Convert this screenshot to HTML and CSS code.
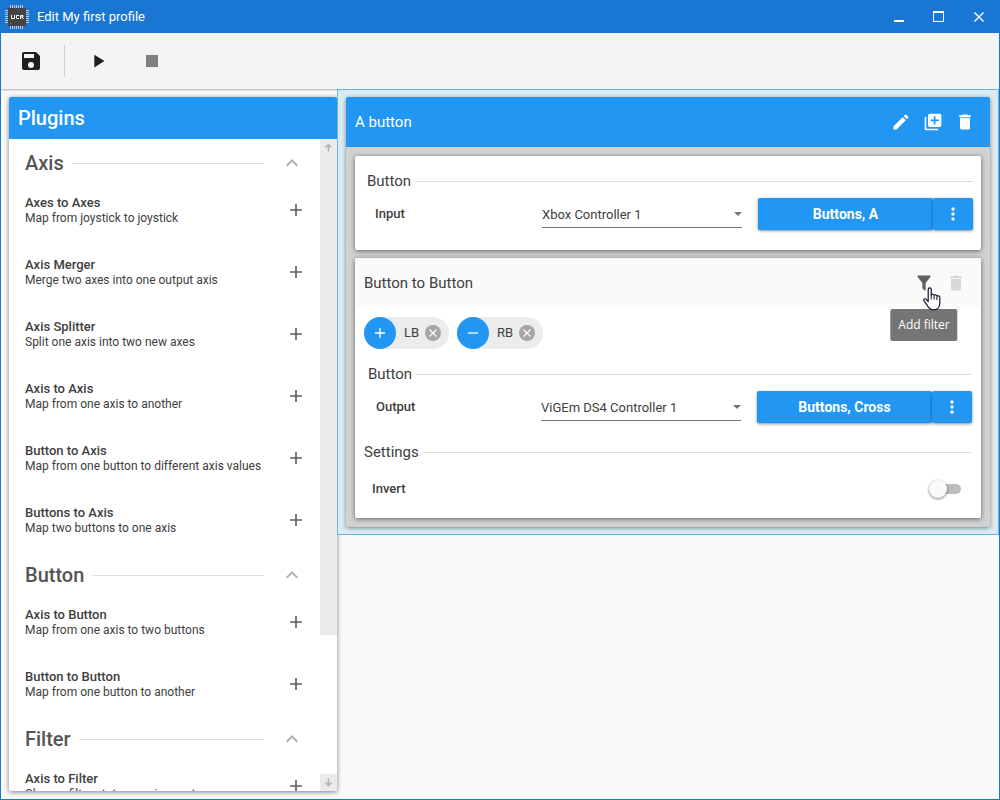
FILE: index.html
```html
<!DOCTYPE html>
<html lang="en">
<head>
<meta charset="utf-8">
<title>Edit My first profile</title>
<link rel="stylesheet" href="styles.css">
</head>
<body>
<svg class="symbols" aria-hidden="true">
  <symbol id="i-thin-plus" viewBox="0 0 12 12"><path fill="none" stroke="currentColor" stroke-width="1.700" d="M6 0v12M0 6h12"/></symbol>
  <symbol id="i-up" viewBox="0 0 24 24"><path d="M7.400 15.400 12 10.800l4.600 4.600L18 14l-6-6-6 6z"/></symbol>
  <symbol id="i-trash" viewBox="0 0 24 24"><path d="M19 4h-3.500l-1-1h-5l-1 1H5v2h14M6 19a2 2 0 0 0 2 2h8a2 2 0 0 0 2-2V7H6z"/></symbol>
  <symbol id="i-dots" viewBox="0 0 24 24"><path d="M12 16a2 2 0 1 1 0 4 2 2 0 0 1 0-4m0-6a2 2 0 1 1 0 4 2 2 0 0 1 0-4m0-6a2 2 0 1 1 0 4 2 2 0 0 1 0-4"/></symbol>
  <symbol id="i-cross" viewBox="0 0 16 16"><circle cx="8" cy="8" r="8" fill="#a6a6a6"/><path d="M4.500 4.500l7 7m0-7l-7 7" stroke="#fff" stroke-width="1.200" fill="none"/></symbol>
</svg>

<header class="titlebar">
  <svg class="logo" viewBox="0 0 24 24" aria-hidden="true">
    <path stroke="#c4c8cc" stroke-width="1" d="M5.500 0v24M7.500 0v24M9.500 0v24M11.500 0v24M13.500 0v24M15.500 0v24M17.500 0v24M0 5.500h24M0 7.500h24M0 9.500h24M0 11.500h24M0 13.500h24M0 15.500h24M0 17.500h24"/>
    <rect x="3" y="3" width="18" height="18" rx="1" fill="#444"/>
    <path fill="none" stroke="#fff" stroke-width="1" d="M6.500 10v3.500h3V10M14 10.500h-2.500v3H14M15.500 14v-3.500h2.500v1.500h-2.500M17 12l1.500 2"/>
    <rect x="5" y="18" width="1" height="1" fill="#888"/>
  </svg>
  <h1 class="title">Edit My first profile</h1>
  <button class="win-btn" aria-label="Minimize"><svg width="12" height="12"><path d="M1 9h10v2H1z"/></svg></button>
  <button class="win-btn" aria-label="Maximize"><svg width="12" height="12"><path fill-rule="evenodd" d="M0 0h11v11H0zM1 2v8h9V2z"/></svg></button>
  <button class="win-btn" aria-label="Close"><svg width="12" height="12"><path fill="none" stroke="#fff" stroke-width="1.400" d="M1.500 1.500l9 9m0-9l-9 9"/></svg></button>
</header>

<nav class="toolbar">
  <button class="tool" aria-label="Save"><svg width="24" height="24" viewBox="0 0 24 24"><path d="M15 9H5V5h10m-3 14a3 3 0 1 1 0-6 3 3 0 0 1 0 6m5-16H5a2 2 0 0 0-2 2v14a2 2 0 0 0 2 2h14a2 2 0 0 0 2-2V7z"/></svg></button>
  <span class="tool-sep"></span>
  <button class="tool" aria-label="Play"><svg width="22" height="22" viewBox="0 0 24 24"><path d="M8 5.100v14L19 12z"/></svg></button>
  <button class="tool" aria-label="Stop" disabled><svg width="24" height="24" viewBox="0 0 24 24"><path d="M6 6h12v12H6z"/></svg></button>
</nav>

<div class="workspace">
  <aside class="plugins">
    <h2 class="plugins-title">Plugins</h2>
    <div class="plugins-body">
      <div class="plugin-list">
        <section>
          <h3 class="group"><span>Axis</span><button class="icon-sm" aria-label="Collapse Axis"><svg width="24" height="24"><use href="#i-up"/></svg></button></h3>
          <ul class="items">
            <li><div><b>Axes to Axes</b><p>Map from joystick to joystick</p></div><button class="add" aria-label="Add Axes to Axes"><svg width="12" height="12"><use href="#i-thin-plus"/></svg></button></li>
            <li><div><b>Axis Merger</b><p>Merge two axes into one output axis</p></div><button class="add" aria-label="Add Axis Merger"><svg width="12" height="12"><use href="#i-thin-plus"/></svg></button></li>
            <li><div><b>Axis Splitter</b><p>Split one axis into two new axes</p></div><button class="add" aria-label="Add Axis Splitter"><svg width="12" height="12"><use href="#i-thin-plus"/></svg></button></li>
            <li><div><b>Axis to Axis</b><p>Map from one axis to another</p></div><button class="add" aria-label="Add Axis to Axis"><svg width="12" height="12"><use href="#i-thin-plus"/></svg></button></li>
            <li><div><b>Button to Axis</b><p>Map from one button to different axis values</p></div><button class="add" aria-label="Add Button to Axis"><svg width="12" height="12"><use href="#i-thin-plus"/></svg></button></li>
            <li><div><b>Buttons to Axis</b><p>Map two buttons to one axis</p></div><button class="add" aria-label="Add Buttons to Axis"><svg width="12" height="12"><use href="#i-thin-plus"/></svg></button></li>
          </ul>
        </section>
        <section>
          <h3 class="group"><span>Button</span><button class="icon-sm" aria-label="Collapse Button"><svg width="24" height="24"><use href="#i-up"/></svg></button></h3>
          <ul class="items">
            <li><div><b>Axis to Button</b><p>Map from one axis to two buttons</p></div><button class="add" aria-label="Add Axis to Button"><svg width="12" height="12"><use href="#i-thin-plus"/></svg></button></li>
            <li><div><b>Button to Button</b><p>Map from one button to another</p></div><button class="add" aria-label="Add Button to Button"><svg width="12" height="12"><use href="#i-thin-plus"/></svg></button></li>
          </ul>
        </section>
        <section>
          <h3 class="group"><span>Filter</span><button class="icon-sm" aria-label="Collapse Filter"><svg width="24" height="24"><use href="#i-up"/></svg></button></h3>
          <ul class="items">
            <li><div><b>Axis to Filter</b><p>Change filter state on axis event</p></div><button class="add" aria-label="Add Axis to Filter"><svg width="12" height="12"><use href="#i-thin-plus"/></svg></button></li>
          </ul>
        </section>
      </div>
      <div class="scroll" aria-hidden="true">
        <div class="thumb"><svg width="9" height="9"><path d="M4.500 8.500V1.500M1.500 4.500l3-3 3 3"/></svg></div>
        <div class="scroll-end"><svg width="9" height="9"><path d="M4.500 .500v7M1.500 4.500l3 3 3-3"/></svg></div>
      </div>
    </div>
  </aside>

  <main class="content">
    <div class="selected">
      <article class="mapping">
        <header class="mapping-head">
          <h2>A button</h2>
          <button class="icon" aria-label="Rename"><svg width="20" height="20" viewBox="0 0 24 24"><path d="M20.700 7c.4-.4.4-1 0-1.400l-2.300-2.300a1 1 0 0 0-1.400 0l-1.800 1.800 3.700 3.700M3 17.200V21h3.700L17.800 9.900 14.100 6.200z"/></svg></button>
          <button class="icon" aria-label="Duplicate"><svg width="20" height="20" viewBox="0 0 24 24"><path fill-rule="evenodd" d="M2 6h2v14h14v2H4a2 2 0 0 1-2-2zM8 2h12a2 2 0 0 1 2 2v12a2 2 0 0 1-2 2H8a2 2 0 0 1-2-2V4a2 2 0 0 1 2-2zm5 3v4H9v2h4v4h2v-4h4V9h-4V5z"/></svg></button>
          <button class="icon" aria-label="Delete"><svg width="20" height="20"><use href="#i-trash"/></svg></button>
        </header>
        <div class="mapping-body">
          <section class="card card-input">
            <h3 class="legend">Button</h3>
            <div class="row">
              <label for="input-dev">Input</label>
              <span class="select"><select id="input-dev"><option>Xbox Controller 1</option></select><svg width="8" height="4"><path d="M0 0h8L4 4z"/></svg></span>
              <span class="split"><button class="bind">Buttons, A</button><button class="more" aria-label="Input options"><svg width="20" height="20"><use href="#i-dots"/></svg></button></span>
            </div>
          </section>

          <section class="card">
            <header class="card-head">
              <h3>Button to Button</h3>
              <div class="tip-anchor">
                <button class="icon" aria-label="Add filter" aria-describedby="tip"><svg width="20" height="20" viewBox="0 0 24 24"><path d="M14 12v7.900c0 .3-.1.600-.3.800a1 1 0 0 1-1.400 0l-2-2c-.2-.2-.3-.5-.3-.8V12L4.200 4.600A1 1 0 0 1 5 3h14a1 1 0 0 1 .8 1.600z"/></svg></button>
                <svg class="cursor" width="18" height="24" viewBox="0 0 18 24" aria-hidden="true"><path fill="#fff" stroke="#15152a" stroke-width="1.200" stroke-linejoin="round" d="M5.200 14.500V2.500c0-2.200 3-2.200 3 0v5.600c.5-1.400 2.900-1.100 2.900.5.600-1.200 2.800-.8 2.800.7.700-.9 2.900-.6 2.900 1.200v5.500c0 3.700-2.200 6.800-6.100 6.800-3.500 0-4.900-1.700-6.200-4.100L1 13.900c-.9-1.700 1-2.800 2.200-1.600z"/><path fill="none" stroke="#15152a" d="M8.200 8v4.500M11.100 9v3.500M13.900 10v3"/></svg>
                <span class="tip" id="tip" role="tooltip">Add filter</span>
              </div>
              <button class="icon" aria-label="Delete plugin" disabled><svg width="20" height="20"><use href="#i-trash"/></svg></button>
            </header>
            <div class="chips">
              <span class="chip"><span class="chip-icon"><svg width="20" height="20" viewBox="0 0 20 20"><path d="M10 5v10M5 10h10"/></svg></span>LB<button aria-label="Remove LB"><svg width="16" height="16"><use href="#i-cross"/></svg></button></span>
              <span class="chip"><span class="chip-icon"><svg width="20" height="20" viewBox="0 0 20 20"><path d="M5 10h10"/></svg></span>RB<button aria-label="Remove RB"><svg width="16" height="16"><use href="#i-cross"/></svg></button></span>
            </div>
            <div class="binding">
              <h3 class="legend">Button</h3>
              <div class="row">
                <label for="output-dev">Output</label>
                <span class="select"><select id="output-dev"><option>ViGEm DS4 Controller 1</option></select><svg width="8" height="4"><path d="M0 0h8L4 4z"/></svg></span>
                <span class="split"><button class="bind">Buttons, Cross</button><button class="more" aria-label="Output options"><svg width="20" height="20"><use href="#i-dots"/></svg></button></span>
              </div>
            </div>
            <div class="settings">
              <h3 class="legend">Settings</h3>
              <div class="row">
                <label for="invert">Invert</label>
                <input class="switch" type="checkbox" role="switch" id="invert">
              </div>
            </div>
          </section>
        </div>
      </article>
    </div>
  </main>
</div>
</body>
</html>
```
FILE: styles.css
```css
* { box-sizing: border-box; margin: 0; padding: 0; }

body {
  display: flex;
  flex-direction: column;
  height: 100vh;
  border: 1px solid #1976d2;
  background: #fafafa;
  color: #404040;
  font: 13px/16px Roboto, sans-serif;
  overflow: hidden;
}

svg { display: block; fill: currentColor; }
.symbols { position: absolute; width: 0; height: 0; }
button, select { font: inherit; color: inherit; background: none; border: 0; }
button { display: flex; align-items: center; justify-content: center; }

/* Window chrome */
.titlebar {
  display: flex;
  align-items: center;
  height: 32px;
  padding-left: 4px;
  background: #1976d2;
  color: #fff;
}
.logo { width: 24px; height: 24px; margin-right: 8px; }
.title { flex: 1; font-size: 13px; font-weight: 400; }
.win-btn { width: 40px; height: 32px; }

.toolbar {
  display: flex;
  align-items: center;
  height: 56px;
  flex-shrink: 0;
  padding-left: 6px;
  background: #f4f4f4;
  color: #202020;
  box-shadow: 0 1px 2px rgba(0, 0, 0, .3);
}
.tool { width: 48px; height: 48px; margin-right: 6px; }
.tool:disabled { color: #808080; }
.tool-sep { width: 1px; height: 32px; margin: 0 9px 0 3px; background: #cfcfcf; }

.workspace { display: flex; flex: 1; min-height: 0; }

/* Plugin sidebar */
.plugins {
  display: flex;
  flex-direction: column;
  flex: 0 0 328px;
  margin: 8px 0 8px 8px;
  background: #fff;
  border-radius: 2px;
  box-shadow: 0 1px 5px rgba(0, 0, 0, .5);
  overflow: hidden;
}
.plugins-title {
  padding: 9px;
  background: #2196f3;
  color: #fff;
  font-size: 20px;
  line-height: 24px;
  font-weight: 500;
}
.plugins-body { display: flex; flex: 1; min-height: 0; }
.plugin-list { flex: 1; overflow: hidden; padding-left: 16px; }
.group {
  display: flex;
  align-items: center;
  height: 48px;
  padding-right: 16px;
  color: #555;
  font-size: 20px;
  font-weight: 500;
}
.group span { display: flex; align-items: center; flex: 1; }
.group span::after { content: ""; flex: 1; height: 1px; margin-left: 8px; background: #dedede; }
.icon-sm { width: 24px; height: 24px; margin-left: 16px; color: #b0b0b0; }
.items { display: flex; flex-direction: column; gap: 16px; padding-bottom: 8px; list-style: none; }
.items li { display: flex; align-items: center; justify-content: space-between; height: 46px; padding-right: 8px; }
.items b { display: block; font-weight: 500; line-height: 16px; }
.items p { font-size: 12px; line-height: 15px; }
.add { width: 32px; height: 32px; color: #606060; }
.scroll { display: flex; flex-direction: column; justify-content: space-between; width: 17px; color: #b0b0b0; }
.scroll path { fill: none; stroke: currentColor; stroke-width: 1.5; }
.thumb { height: 76%; padding: 4px; background: #ebebeb; }
.scroll-end { padding: 4px; background: #ebebeb; }

/* Mapping editor */
.content { flex: 1; min-width: 0; }
.selected {
  position: relative;
  padding: 7px 8px;
  border: 1px solid #64b5e2;
  background: #dcebf3;
}
.mapping { border-radius: 2px; background: #d2d2d2; box-shadow: 0 1px 4px rgba(0, 0, 0, .45); }
.mapping-head, .card-head {
  display: flex;
  align-items: center;
  height: 50px;
  padding: 0 9px;
  border-radius: 2px 2px 0 0;
}
.mapping-head { background: #2196f3; color: #fff; }
.mapping-head h2, .card-head h3 { flex: 1; font-size: 15px; font-weight: 400; }
.icon { width: 32px; height: 32px; }
.mapping-body { display: flex; flex-direction: column; gap: 8px; padding: 9px; }

.card { border-radius: 2px; background: #fff; box-shadow: 0 1px 5px rgba(0, 0, 0, .55); }
.card-input { padding: 16px 8px 20px 12px; }
.card-head { background: #fafafa; }
.card-head .icon { color: #606060; }
.card-head .icon:disabled { color: #d8d8d8; }

.legend { display: flex; align-items: center; gap: 4px; font-size: 15px; line-height: 18px; font-weight: 400; }
.legend::after { content: ""; flex: 1; height: 1px; background: #dcdcdc; }
.row { display: flex; align-items: center; height: 32px; margin-top: 8px; padding-left: 8px; }
.row label { flex: 1; font-weight: 500; }

.select { position: relative; width: 200px; margin-right: 16px; }
.select select {
  display: block;
  width: 100%;
  height: 28px;
  padding-top: 2px;
  border-bottom: 1px solid #757575;
  appearance: none;
}
.select svg { position: absolute; right: 0; top: 12px; color: #757575; }

.split { display: flex; color: #fff; font-size: 14px; font-weight: 700; }
.split button { height: 32px; border-radius: 2px; background: #2196f3; box-shadow: 0 1px 3px rgba(0, 0, 0, .45); }
.split .bind { width: 175px; }
.split .more { width: 40px; }

.chips { display: flex; gap: 8px; padding: 9px; }
.chip { display: flex; align-items: center; padding-right: 8px; border-radius: 16px; background: #ececec; }
.chip-icon {
  display: grid;
  place-items: center;
  width: 32px;
  height: 32px;
  margin-right: 8px;
  border-radius: 50%;
  background: #2196f3;
}
.chip-icon path { stroke: #fff; stroke-width: 1.3; }
.chip button { margin-left: 6px; }

.binding { padding: 7px 9px 0 13px; }
.settings { padding: 20px 9px 13px; }
.settings .row { margin-top: 12px; padding-right: 11px; }

.switch {
  display: flex;
  align-items: center;
  width: 32px;
  height: 10px;
  border-radius: 5px;
  background: #bdbdbd;
  appearance: none;
}
.switch::before {
  content: "";
  width: 18px;
  height: 18px;
  border-radius: 50%;
  background: #fafafa;
  box-shadow: 0 1px 3px rgba(0, 0, 0, .5);
}
.switch:checked { justify-content: flex-end; }

/* Tooltip and pointer over the filter button */
.tip-anchor { position: relative; }
.cursor { position: absolute; left: 15px; top: 20px; z-index: 2; }
.tip {
  position: absolute;
  top: 42px;
  left: 50%;
  transform: translateX(-50%);
  padding: 8px;
  border-radius: 2px;
  background: #757575;
  color: #fff;
  font: 12px/16px "Open Sans", sans-serif;
  white-space: nowrap;
}
```
